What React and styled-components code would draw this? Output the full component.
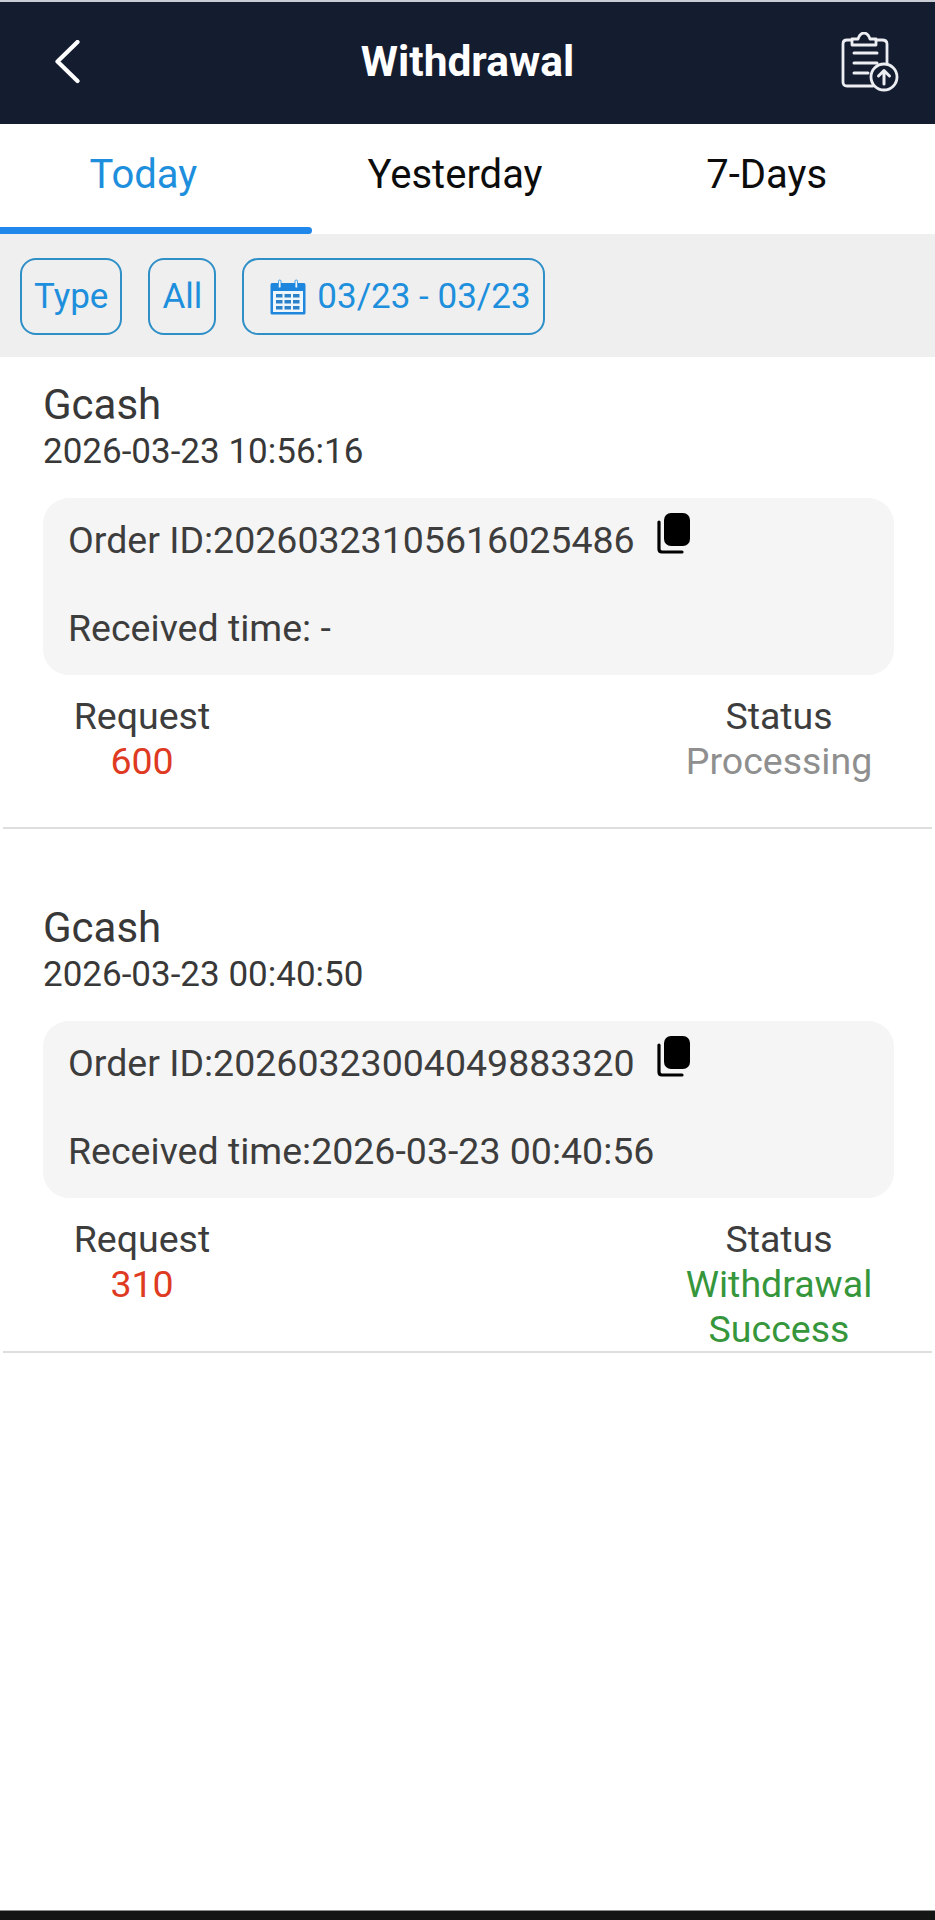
import React from "react";
import styled, { createGlobalStyle } from "styled-components";

const Global = createGlobalStyle`
  html, body { margin: 0; padding: 0; background: #fff; }
  body { font-family: Roboto, "Liberation Sans", sans-serif; }
`;
const Page = styled.div`
  width: 935px; height: 1920px; display: flex; flex-direction: column; overflow: hidden; background: #fff;
`;
const Header = styled.header`
  height: 122px; flex: none; margin-top: 2px; background: #141c30; display: flex; align-items: center;
  padding: 0 36px 0 52px; box-shadow: 0 -2px 0 #c9ccd4;
`;
const HeaderSide = styled.div`
  flex: 1; display: flex; justify-content: ${p => (p.$end ? "flex-end" : "flex-start")};
`;
const Title = styled.h1`
  margin: -2px 16px 0 0; color: #fff; font-size: 42.5px; font-weight: 700; line-height: 1;
`;
const Tabs = styled.nav`
  height: 110px; flex: none; display: flex;
`;
const Tab = styled.div`
  flex: 1; display: flex; align-items: center; justify-content: center; position: relative;
  padding: 0 25px 10px 0; box-sizing: border-box; font-size: 40px; color: ${p => (p.$active ? "#1e8fdc" : "#0c0c0c")};
  ${p => p.$active && `&::after { content: ""; position: absolute; left: 0; right: 0; bottom: 0; height: 7px; background: #1f88ea; border-radius: 0 4px 4px 0; }`}
`;
const Filters = styled.div`
  height: 123px; flex: none; background: #efefef; display: flex; align-items: center; gap: 26px; padding: 2px 20px 0; box-sizing: border-box;
`;
const Chip = styled.div`
  height: 77px; box-sizing: border-box; border: 2px solid #2f8fc7; border-radius: 16px; padding: ${p => (p.$wide ? "0 12px 0 26px" : "0 12px")};
  display: flex; align-items: center; gap: 11px; color: #1e8fdc; font-size: 35px;
`;
const Record = styled.article`
  height: ${p => p.$h}px; flex: none; box-sizing: border-box; padding: 25px 0 0; display: flex; flex-direction: column;
  border-bottom: 2px solid #dedede; margin: 0 3px 0; ${p => p.$gap && `margin-top: ${p.$gap}px;`}
`;
const Method = styled.div`
  margin-left: 40px; font-size: 42px; line-height: 45px; color: #383838;
`;
const Stamp = styled.div`
  margin: 2px 0 0 40px; font-size: 35px; line-height: 45px; color: #383838;
`;
const Details = styled.div`
  margin: 24px 38px 0 40px; height: 177px; flex: none; box-sizing: border-box; background: #f5f5f5; border-radius: 26px; padding: 20px 25px 0;
  font-size: 37.500px; color: #3d3d3d; display: flex; flex-direction: column; gap: 44px;
`;
const DetailLine = styled.div`
  line-height: 44px; display: flex; align-items: flex-start; gap: 22px;
`;
const CopyButton = styled.span`
  display: block; height: 40px; margin-top: -5px;
`;
const Summary = styled.div`
  display: flex; justify-content: space-between; margin-top: 19px; padding: 0 58px 0 69px;
`;
const Col = styled.div`
  width: ${p => p.$w}px; text-align: center; font-size: 37.500px; line-height: 45px; color: #3d3d3d;
`;
const Value = styled.div`
  color: ${p => p.$c};
`;
const Spacer = styled.div`flex: 1;`;
const Bottom = styled.div`
  height: 10px; flex: none; background: #151515; border-top: 1px solid #8c8c8c; box-sizing: border-box;
`;

const Back = () => (
  <svg width="30" height="46" viewBox="0 0 30 46" fill="none" stroke="#fff" strokeWidth="4.200" strokeLinecap="round" strokeLinejoin="round">
    <path d="M25.500 2 L5.500 21.500 L25.500 41" />
  </svg>
);
const ClipUp = () => (
  <svg width="58" height="62" viewBox="0 0 58 62" fill="none" stroke="#eceef2" strokeWidth="2.800" strokeLinecap="round" strokeLinejoin="round">
    <path d="M32 54 H6 Q2 54 2 50 V12 Q2 8 6 8 H11 M35 8 H41 Q46 8 46 12 V32" />
    <path d="M11 13 V7 H17 Q19 1 23 1 Q27 1 29 7 H35 V13 Z" />
    <path d="M13 21 H36 M13 31 H36 M13 41 H27" strokeWidth="3" />
    <circle cx="43" cy="45" r="13" />
    <path d="M43 52 V39 M37.500 44 L43 38.500 L48.500 44" strokeWidth="3" />
  </svg>
);
const Calendar = () => (
  <svg width="36" height="36" viewBox="0 0 36 36">
    <path fill="#1e86dd" d="M2 4 H8 V8 H11 V4 H25 V8 H28 V4 H34 Q35.500 4 35.500 6 V34 Q35.500 35.500 34 35.500 H2 Q.5 35.500 .5 34 V6 Q.5 4 2 4Z" />
    <rect x="3" y="12" width="30" height="21" fill="#eef5fb" />
    <rect x="8.500" y="1" width="2.500" height="8" rx="1.200" fill="#eef5fb" stroke="#1e86dd" strokeWidth=".8" />
    <rect x="25" y="1" width="2.500" height="8" rx="1.200" fill="#eef5fb" stroke="#1e86dd" strokeWidth=".8" />
    <g fill="#2c82c9">
      {[15, 21, 27].map(y => [6, 14.500, 23].map(x => <rect key={`${x}-${y}`} x={x} y={y} width="6.500" height="3.500" />))}
    </g>
  </svg>
);
const Copy = () => (
  <svg width="34" height="41" viewBox="0 0 34 41">
    <path d="M2 9 V36 Q2 39 5 39 H25" fill="none" stroke="#000" strokeWidth="3.200" strokeLinecap="round" />
    <rect x="7" y="0" width="26" height="33" rx="7" fill="#000" />
  </svg>
);

const records = [
  { time: "2026-03-23 10:56:16", id: "20260323105616025486", rec: " -", req: "600", status: "Processing", color: "#8f8f8f", h: 472 },
  { time: "2026-03-23 00:40:50", id: "20260323004049883320", rec: "2026-03-23 00:40:56", req: "310", status: "Withdrawal Success", color: "#36963b", h: 473, gap: 51 },
];

export default function App() {
  return (
    <Page>
      <Global />
      <Header>
        <HeaderSide><Back /></HeaderSide>
        <Title>Withdrawal</Title>
        <HeaderSide $end><ClipUp /></HeaderSide>
      </Header>
      <Tabs>
        <Tab $active>Today</Tab>
        <Tab>Yesterday</Tab>
        <Tab>7-Days</Tab>
      </Tabs>
      <Filters>
        <Chip>Type</Chip>
        <Chip>All</Chip>
        <Chip $wide><Calendar />03/23 - 03/23</Chip>
      </Filters>
      {records.map(r => (
        <Record key={r.id} $h={r.h} $gap={r.gap}>
          <Method>Gcash</Method>
          <Stamp>{r.time}</Stamp>
          <Details>
            <DetailLine>Order ID:{r.id}<CopyButton><Copy /></CopyButton></DetailLine>
            <DetailLine>Received time:{r.rec}</DetailLine>
          </Details>
          <Summary>
            <Col $w={140}>Request<Value $c="#df3a22">{r.req}</Value></Col>
            <Col $w={190}>Status<Value $c={r.color}>{r.status}</Value></Col>
          </Summary>
        </Record>
      ))}
      <Spacer />
      <Bottom />
    </Page>
  );
}
